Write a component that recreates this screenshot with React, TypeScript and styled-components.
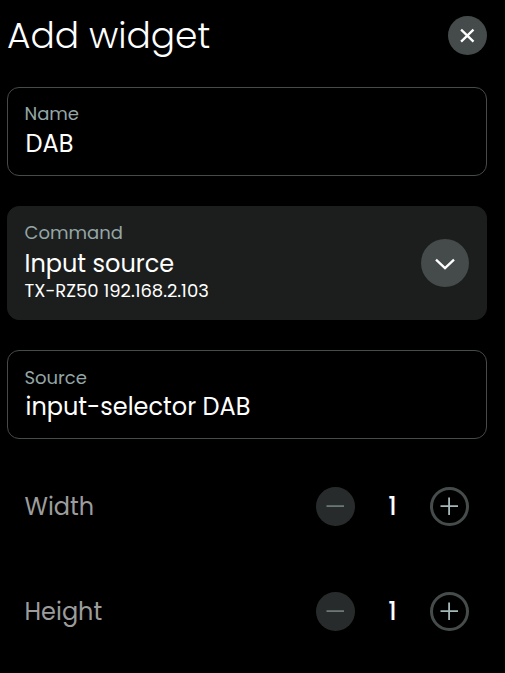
import React from "react";
import styled, { createGlobalStyle } from "styled-components";

const GlobalStyle = createGlobalStyle`
  * { box-sizing: border-box; }
  body {
    margin: 0;
    background: #000;
    color: #fff;
    font-family: Poppins, Inter, sans-serif;
    font-feature-settings: "cv11" 1;
  }
`;

const Dialog = styled.main`
  width: 505px;
  height: 673px;
  padding: 0 18px 0 7px;
  overflow: hidden;
  background: #000;
`;

const Header = styled.header`
  display: flex;
  align-items: center;
  justify-content: space-between;
  height: 71px;
`;

const Text = styled.span<{ $size: number; $line: number; $indent?: number; $weight?: number; $color?: string }>`
  display: block;
  white-space: nowrap;
  font-size: ${(p) => p.$size}px;
  line-height: ${(p) => p.$line}px;
  padding-left: ${(p) => p.$indent ?? 0}px;
  font-weight: ${(p) => p.$weight ?? 400};
  color: ${(p) => p.$color ?? "#fff"};
`;

const Form = styled.div`
  display: flex;
  flex-direction: column;
  gap: 30px;
  padding-top: 16px;
`;

const Field = styled.section<{ $filled?: boolean }>`
  display: flex;
  align-items: center;
  justify-content: space-between;
  height: ${(p) => (p.$filled ? 114 : 89)}px;
  padding: 0 17px 0 16px;
  border: 1px solid ${(p) => (p.$filled ? "#1c1e1d" : "#454b4a")};
  border-radius: 12px;
  background: ${(p) => (p.$filled ? "#1c1e1d" : "#000")};
`;

const FieldText = styled.div<{ $top: number }>`
  align-self: flex-start;
  padding-top: ${(p) => p.$top}px;
`;

const RoundButton = styled.button<{ $size?: number; $kind?: "muted" | "outline" }>`
  display: flex;
  align-items: center;
  justify-content: center;
  flex: none;
  width: ${(p) => p.$size ?? 39}px;
  height: ${(p) => p.$size ?? 39}px;
  padding: 0;
  border: ${(p) => (p.$kind === "outline" ? "3px solid #454c4b" : "0")};
  border-radius: 50%;
  background: ${(p) => (p.$kind === "outline" ? "#000" : p.$kind === "muted" ? "#282b2b" : "#444b4a")};
  color: ${(p) => (p.$kind === "outline" ? "#a5b8b9" : p.$kind === "muted" ? "#6b7676" : "#fff")};
`;

const Steppers = styled.div`
  display: flex;
  flex-direction: column;
  gap: 66px;
  padding: 18px 18px 0 17px;
`;

const StepperRow = styled.div`
  display: flex;
  align-items: center;
  justify-content: space-between;
  height: 39px;
`;

const Stepper = styled.div`
  display: flex;
  align-items: center;
  justify-content: space-between;
  width: 153px;
`;

const Icon = ({ d, size, stroke }: { d: string; size: number; stroke: number }) => (
  <svg width={size} height={size} viewBox={`0 0 ${size} ${size}`} fill="none" stroke="currentColor" strokeWidth={stroke}>
    <path d={d} />
  </svg>
);

const LABEL = "#94a6a7";

const SizeRow = ({ label }: { label: string }) => (
  <StepperRow>
    <Text $size={24} $line={39} $indent={0.5} $color="#9c9c9c">{label}</Text>
    <Stepper>
      <RoundButton $kind="muted" aria-label={`Decrease ${label}`}>
        <Icon size={39} stroke={1.8} d="M10.5 19.1H28" />
      </RoundButton>
      <Text $size={24} $line={39} $weight={500}>1</Text>
      <RoundButton $kind="outline" aria-label={`Increase ${label}`}>
        <Icon size={33} stroke={1.8} d="M7.5 16.1H25M16.1 7.5V25" />
      </RoundButton>
    </Stepper>
  </StepperRow>
);

export default function App() {
  return (
    <Dialog>
      <GlobalStyle />
      <Header>
        <Text $size={36} $line={51} $weight={300}>Add widget</Text>
        <RoundButton aria-label="Close">
          <Icon size={39} stroke={2.3} d="M13.1 13.6L25.5 25.6M25.5 13.6L13.1 25.6" />
        </RoundButton>
      </Header>
      <Form>
        <Field>
          <FieldText $top={14}>
            <Text $size={18} $line={24} $indent={0.5} $color={LABEL}>Name</Text>
            <Text $size={24} $line={35} $indent={1.5}>DAB</Text>
          </FieldText>
        </Field>
        <Field $filled>
          <FieldText $top={14}>
            <Text $size={18} $line={24} $indent={0.5} $color={LABEL}>Command</Text>
            <Text $size={24} $line={38} $indent={0.5}>Input source</Text>
            <Text $size={18} $line={15} $indent={0.5}>TX-RZ50 192.168.2.103</Text>
          </FieldText>
          <RoundButton $size={48} aria-label="Choose command">
            <Icon size={48} stroke={2.3} d="M15 20.6L24 29.2L33 20.6" />
          </RoundButton>
        </Field>
        <Field>
          <FieldText $top={15}>
            <Text $size={18} $line={24} $indent={0.5} $color={LABEL}>Source</Text>
            <Text $size={24} $line={33} $indent={1.5}>input-selector DAB</Text>
          </FieldText>
        </Field>
        <Steppers>
          <SizeRow label="Width" />
          <SizeRow label="Height" />
        </Steppers>
      </Form>
    </Dialog>
  );
}
